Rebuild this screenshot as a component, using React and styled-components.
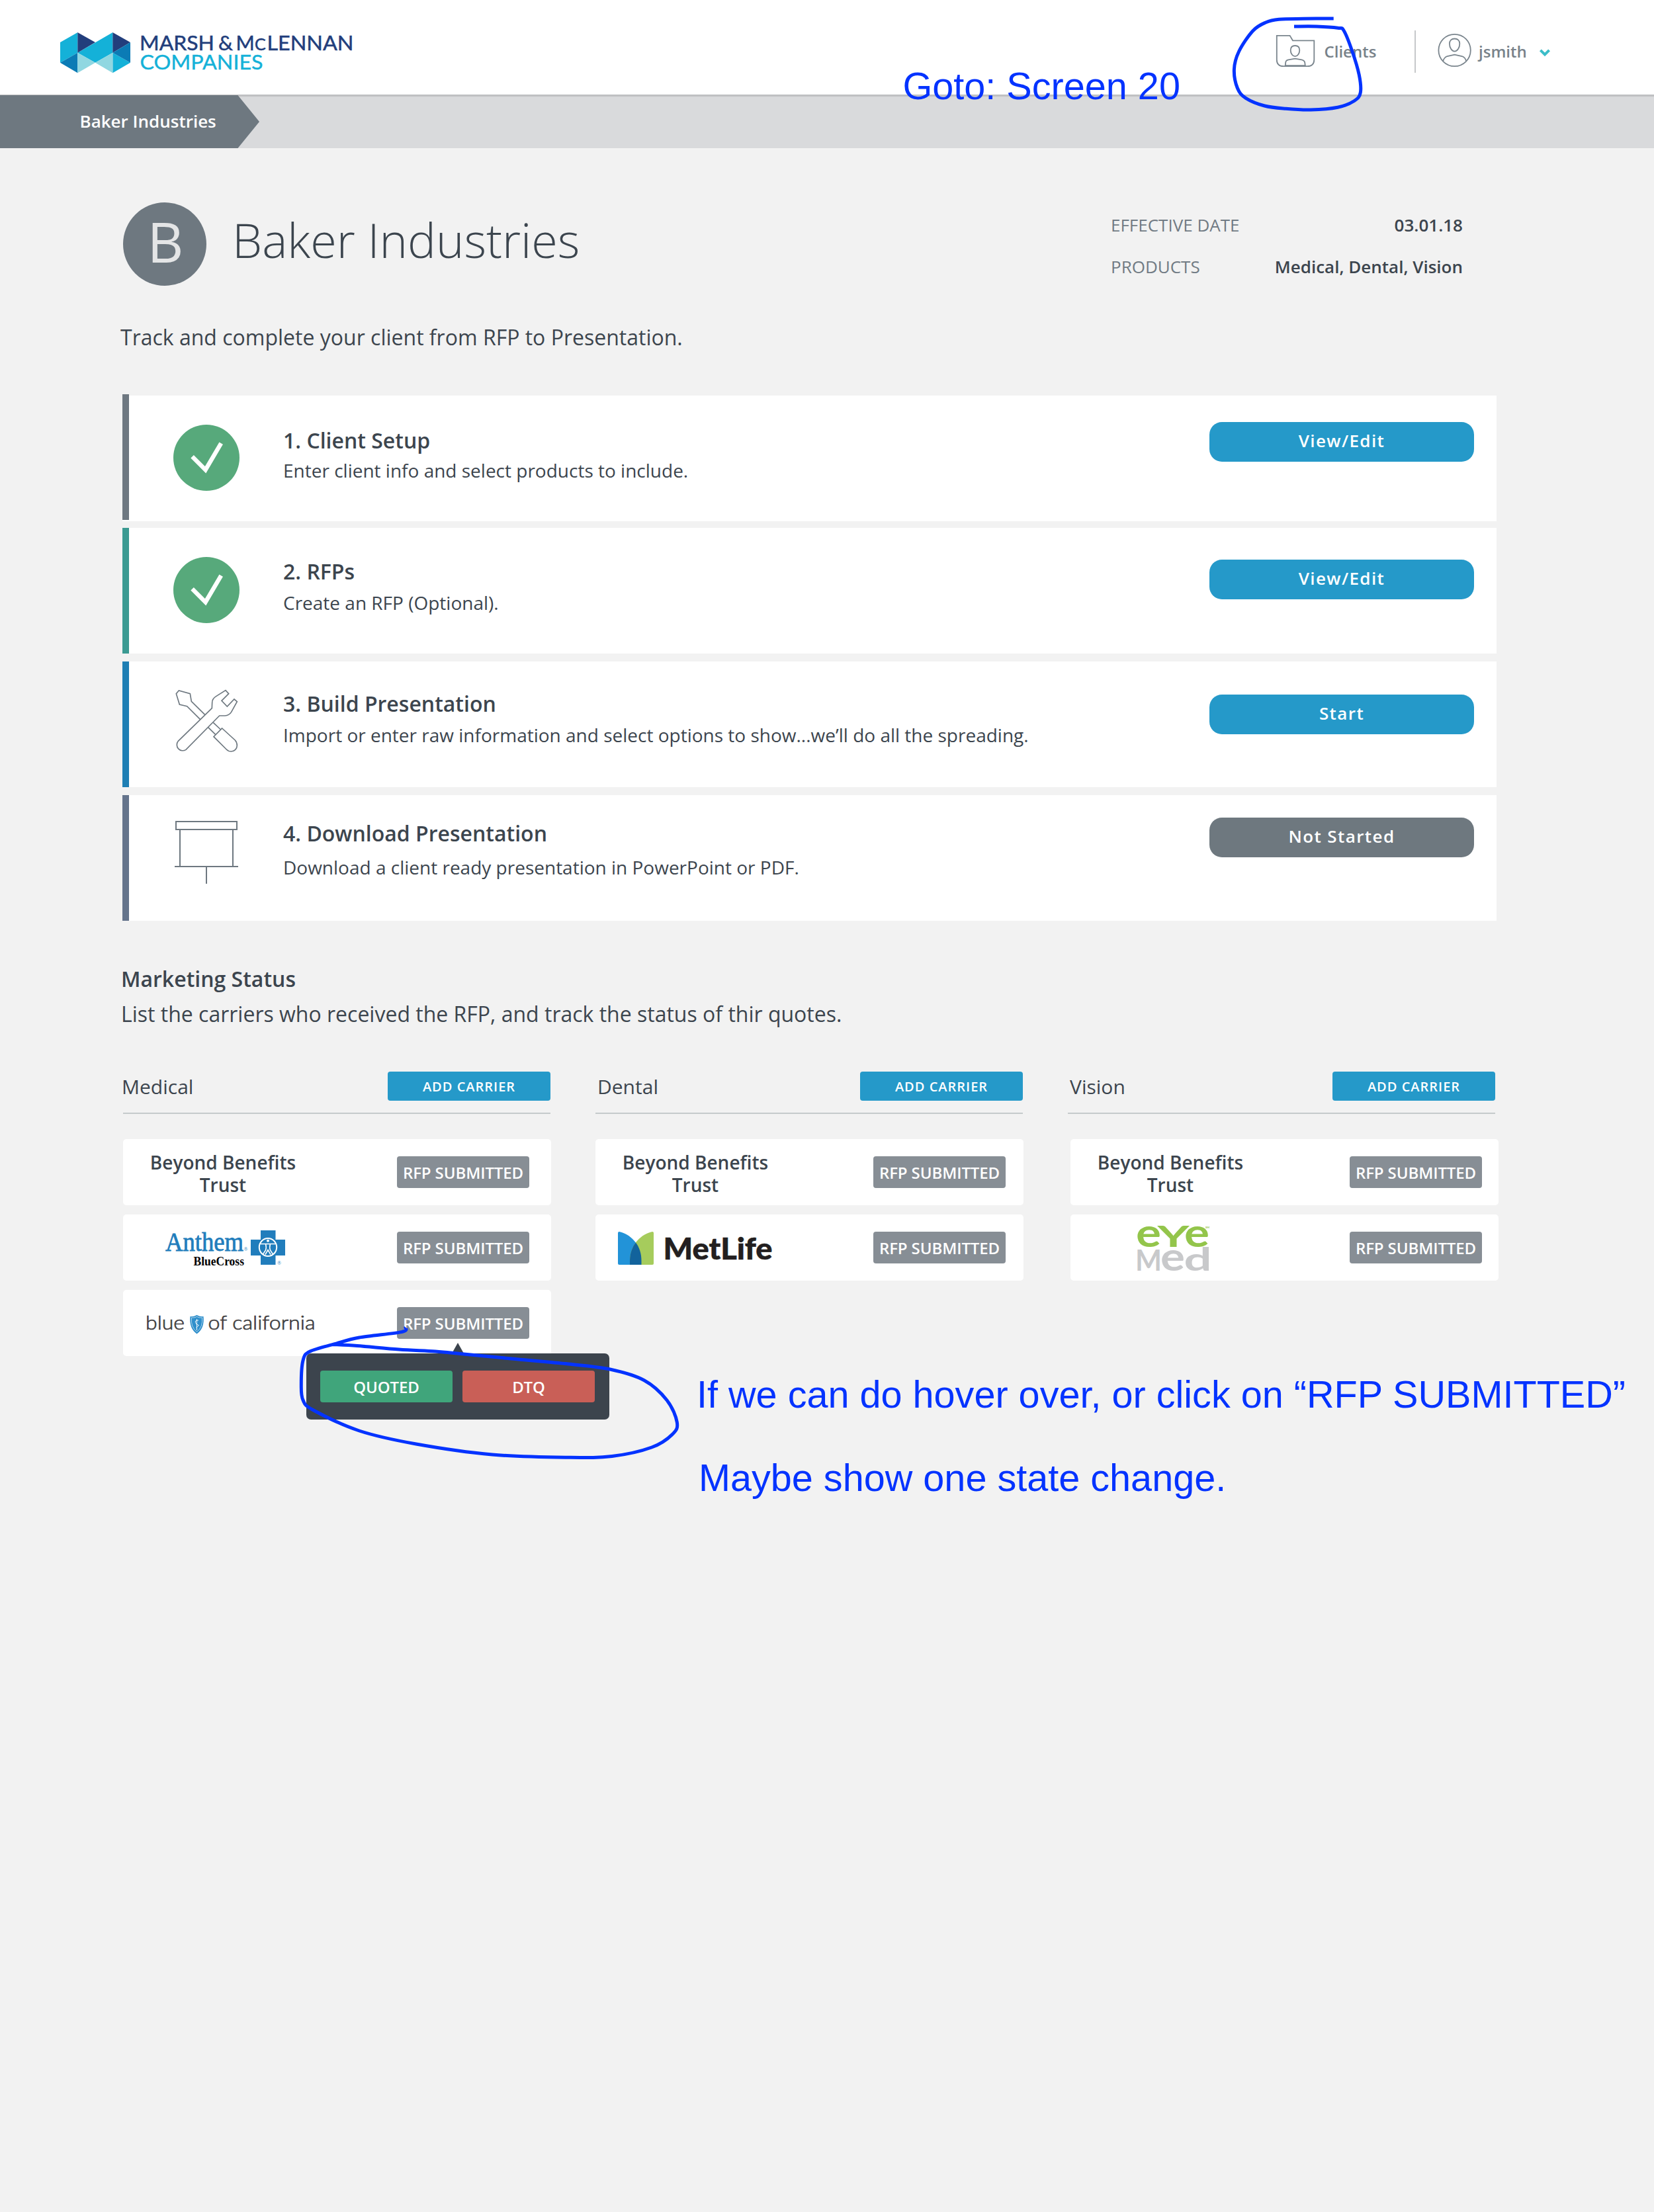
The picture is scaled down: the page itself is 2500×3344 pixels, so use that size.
import React from 'react';
import styled, { createGlobalStyle } from 'styled-components';

const SANS = '"Open Sans", "Noto Sans", sans-serif';
const INK = '#0433ff';
const SLATE = '#3c454e';
const GREY = '#6e7880';
const BLUE = '#2599c9';

const GlobalStyle = createGlobalStyle`
  * { box-sizing: border-box; }
  body { margin: 0; background: #f2f2f2; font-family: ${SANS}; color: ${SLATE}; }
  svg { display: block; flex: none; overflow: visible; }
`;

const Page = styled.div`
  position: relative;
  width: 2500px;
  height: 3344px;
  overflow: hidden;
  background: #f2f2f2;
`;

/* ---------- top bar ---------- */

const Header = styled.header`
  display: flex;
  align-items: flex-start;
  height: 144px;
  padding: 0 156px 0 91px;
  background: #fff;
  border-bottom: 1px solid #b5b6b8;
`;

const LogoWrap = styled.div`
  padding-top: 39px;
`;

const Nav = styled.nav`
  display: flex;
  align-items: flex-start;
  margin-left: auto;
  padding-top: 46px;
`;

const NavItem = styled.div`
  display: flex;
  width: ${(p) => p.$width}px;
`;

const NavLabel = styled.span`
  padding-top: 14px;
  margin-left: ${(p) => p.$gap}px;
  font-size: 24px;
  font-weight: 600;
  line-height: 35px;
  color: #78828a;
`;

const NavDivider = styled.span`
  width: 2px;
  height: 64px;
  margin-right: 33px;
  background: #c6c8ca;
`;

const CrumbBar = styled.div`
  height: 80px;
  background: linear-gradient(#c3c4c6 0 2px, #d5d6d8 2px 3px, #d9dadc 3px);
`;

const Crumb = styled.div`
  width: 392px;
  height: 80px;
  padding-left: 120.5px;
  background: #6e7880;
  clip-path: polygon(0 0, 359.5px 0, 100% 50%, 359.5px 100%, 0 100%);
  color: #fff;
  font-size: 26px;
  font-weight: 600;
  line-height: 78px;
`;

/* ---------- client heading ---------- */

const Main = styled.main`
  width: 2081px;
  margin-left: 185px;
  padding-top: 82px;
`;

const Intro = styled.section`
  display: flex;
  height: 126px;
`;

const Avatar = styled.div`
  width: 126px;
  height: 126px;
  margin-left: 1px;
  border-radius: 50%;
  background: #6e7880;
  color: #e4e5e6;
  font-size: 85px;
  line-height: 116px;
  text-align: center;
  text-indent: 2px;
`;

const ClientName = styled.h1`
  margin: 0 0 0 39px;
  width: 1328px;
  font-size: 72px;
  font-weight: 300;
  line-height: 113px;
`;

const Facts = styled.dl`
  width: 532px;
  margin: 0;
  padding-top: 14px;
`;

const Fact = styled.div`
  display: flex;
  justify-content: space-between;
  height: 63px;
  font-size: 26px;
  line-height: 40px;
`;

const FactLabel = styled.dt`
  color: #717b84;
`;

const FactValue = styled.dd`
  margin: 0;
  font-weight: 600;
`;

const Lead = styled.p`
  margin: 56px 0 0 -3px;
  font-size: 32px;
  line-height: 44px;
`;

/* ---------- steps ---------- */

const Steps = styled.section`
  width: 2077px;
  margin-top: 66px;
`;

const StepCard = styled.article`
  display: flex;
  align-items: flex-start;
  height: 190px;
  margin-bottom: ${(p) => p.$gap}px;
  background: #fff;
`;

const Accent = styled.span`
  flex: none;
  width: 10px;
  height: 190px;
  margin-top: ${(p) => p.$shift || 0}px;
  background: ${(p) => p.$color};
`;

const StepIcon = styled.div`
  width: 233px;
  padding: ${(p) => p.$top}px 0 0 67px;
`;

const StepText = styled.div`
  flex: 1;
  padding-top: ${(p) => p.$top}px;
`;

const StepTitle = styled.h2`
  margin: 0 0 ${(p) => p.$gap}px;
  font-size: 32px;
  font-weight: 600;
  line-height: 44px;
`;

const StepDesc = styled.p`
  margin: 0;
  font-size: 28px;
  line-height: 38px;
`;

const StepButton = styled.button`
  width: 400px;
  height: 60px;
  margin: ${(p) => p.$top}px 34px 0 0;
  padding: 0 0 3px;
  border: 0;
  border-radius: 19px;
  background: ${(p) => (p.$muted ? '#6e787f' : BLUE)};
  color: #fff;
  font: 600 26px/55px ${SANS};
  letter-spacing: 1.4px;
`;

/* ---------- marketing status ---------- */

const Marketing = styled.section`
  padding-left: 1px;
  margin-top: 65px;
`;

const MarketingTitle = styled.h2`
  margin: 0;
  font-size: 32px;
  font-weight: 600;
  line-height: 46px;
  text-indent: -3px;
`;

const MarketingLead = styled.p`
  margin: 6px 0 0;
  font-size: 32px;
  line-height: 47px;
  text-indent: -3px;
`;

const Columns = styled.div`
  display: grid;
  grid-template-columns: repeat(3, 646px);
  column-gap: 68px;
  margin-top: 64px;
`;

const ColumnHead = styled.div`
  display: flex;
  justify-content: space-between;
  height: 64px;
  border-bottom: 2px solid #c5cacb;
`;

const ColumnTitle = styled.h3`
  margin: 0 0 0 ${(p) => p.$indent}px;
  font-size: 30px;
  font-weight: 400;
  line-height: 45px;
`;

const AddButton = styled.button`
  width: 246px;
  height: 44px;
  padding: 0;
  border: 0;
  border-radius: 4px;
  background: ${BLUE};
  color: #fff;
  font: 600 20px/45px ${SANS};
  letter-spacing: 1px;
`;

const CarrierList = styled.div`
  display: flex;
  flex-direction: column;
  gap: 14px;
  width: 647px;
  margin: 38px 0 0 ${(p) => p.$shift}px;
`;

const CarrierCard = styled.div`
  display: flex;
  align-items: center;
  height: 100px;
  border-radius: 5px;
  background: #fff;
`;

const CarrierBrand = styled.div`
  flex: none;
  width: ${(p) => p.$width}px;
`;

const CarrierName = styled.div`
  width: 302px;
  padding: 0 30px;
  margin-top: 3px;
  font-size: 28px;
  font-weight: 600;
  line-height: 34px;
  text-align: center;
`;

const BadgeAnchor = styled.div`
  position: relative;
`;

const Badge = styled.div`
  width: 200px;
  height: 48px;
  border-radius: 4px;
  background: ${(p) => p.$color || '#878e95'};
  color: #fff;
  font-size: 24px;
  font-weight: 600;
  line-height: 50px;
  letter-spacing: -0.1px;
  text-align: center;
  white-space: nowrap;
`;

const Popover = styled.div`
  position: absolute;
  z-index: 2;
  left: -137px;
  top: 70px;
  display: flex;
  gap: 15px;
  width: 458px;
  height: 100px;
  padding: 26px 21px;
  border-radius: 7px;
  background: #3c444d;

  &::before {
    content: '';
    position: absolute;
    left: 220px;
    top: -16px;
    border: solid transparent;
    border-width: 0 9px 16px;
    border-bottom-color: #3c444d;
  }
`;

/* ---------- review notes drawn over the page ---------- */

const Note = styled.div`
  position: absolute;
  z-index: 3;
  left: ${(p) => p.$x}px;
  top: ${(p) => p.$y}px;
  color: ${INK};
  font: 57.6px/66px "Liberation Sans", Arial, sans-serif;
  white-space: nowrap;
`;

const InkLayer = styled.svg`
  position: absolute;
  z-index: 4;
  left: 0;
  top: 0;
  pointer-events: none;
`;

/* Smooth curve through a list of points. */
function smoothPath(pts) {
  let d = `M${pts[0][0]} ${pts[0][1]}`;
  for (let i = 0; i < pts.length - 1; i += 1) {
    const a = pts[i - 1] || pts[i];
    const b = pts[i];
    const c = pts[i + 1];
    const e = pts[i + 2] || c;
    d += `C${b[0] + (c[0] - a[0]) / 6} ${b[1] + (c[1] - a[1]) / 6} ${c[0] - (e[0] - b[0]) / 6} ${
      c[1] - (e[1] - b[1]) / 6
    } ${c[0]} ${c[1]}`;
  }
  return d;
}

const clientsLoop = [
  [2015.7, 28], [1970, 28.3], [1933, 29.3], [1913, 34], [1893.6, 46.7], [1872.5, 78], [1865.4, 105],
  [1870.4, 133.3], [1883, 148.3], [1911.4, 160], [1943.6, 164.3], [1981, 166], [2022, 162.3],
  [2047, 152.5], [2056.3, 140], [2054.3, 113.3], [2043.6, 76.7], [2031, 46], [2022, 42.3],
  [1990, 40], [1956, 40],
];

const popoverLoop = [
  [613, 2006.7], [607, 2013.6], [543, 2022], [506, 2031.7], [468.5, 2043], [458, 2056.7],
  [455.3, 2093], [458, 2116.7], [474, 2132], [543, 2163], [629, 2183], [744, 2199], [859, 2203.3],
  [925, 2201.5], [985, 2188], [1016.6, 2168], [1023.3, 2150], [1008, 2116.7], [973.7, 2086.7],
  [922, 2070], [859, 2062], [773, 2054], [698, 2046.7], [658, 2043], [603, 2040], [540, 2034.5],
  [503, 2032.5],
];

/* ---------- drawings ---------- */

const MarshLogo = () => (
  <svg width="450" height="86" viewBox="0 -10 450 86">
    <g transform="scale(0.33333) translate(-93 -87)">
      <path fill="#14b1d8" d="M93 132 172 87V179L93 224ZM172 179 331 87V179L252 224ZM331 179 411 224 331 271Z" />
      <path fill="#223e7c" d="M172 87 252 132 172 179ZM331 87 411 132 331 179Z" />
      <path fill="#0b7bb5" d="M93 224 172 179V271ZM411 132V224L331 179Z" />
      <path fill="#90d7e1" d="M172 179 252 224 172 271ZM331 179V271L252 224Z" />
    </g>
    <g fontFamily="Lato, sans-serif" fontSize="30.500" fill="#223e7c" stroke="#223e7c" strokeWidth="0.500">
      <text x="120" y="26.700" textLength="113" lengthAdjust="spacingAndGlyphs">MARSH</text>
      <text x="239" y="26.700" textLength="22" lengthAdjust="spacingAndGlyphs">&amp;</text>
      <text x="265.500" y="26.700">M<tspan x="294" fontSize="25">C</tspan></text>
      <text x="312.500" y="26.700" textLength="131" lengthAdjust="spacingAndGlyphs">LENNAN</text>
    </g>
    <text x="120.500" y="56" fontFamily="Lato, sans-serif" fontSize="30.500" fill="#14b1d8" stroke="#14b1d8" strokeWidth="0.400" textLength="186" lengthAdjust="spacingAndGlyphs">COMPANIES</text>
  </svg>
);

const ClientsIcon = () => (
  <svg width="60" height="60" viewBox="1928 46 60 60" fill="none" stroke="#7a858d" strokeWidth="1.8">
    <path d="M1929.8 53.8H1949.6L1954 61.3H1986.3V90.3Q1986.3 100.2 1976 100.2H1940Q1929.8 100.2 1929.8 90.3Z" />
    <path d="M1957.5 69C1962 69 1964.3 72 1964.3 76C1964.3 81 1961 85.2 1957.5 85.2S1950.7 81 1950.7 76C1950.7 72 1953 69 1957.5 69Z" />
    <path d="M1942.7 99.2 1943.2 94.5Q1943.7 91 1947.5 90.4L1957.5 88.7 1967.5 90.4Q1971.5 91.2 1972.2 94.5L1972.8 99.2Z" />
  </svg>
);

const UserIcon = () => (
  <svg width="52" height="60" viewBox="2173 46 52 60" fill="none" stroke="#7a858d" strokeWidth="1.8">
    <circle cx="2198.6" cy="76" r="24.2" />
    <path d="M2198.6 58.5C2203.5 58.5 2206.3 61.5 2206.3 66C2206.3 72 2202.8 77.6 2198.6 77.6S2190.9 72 2190.9 66C2190.9 61.5 2193.7 58.5 2198.6 58.5Z" />
    <path d="M2181.3 92Q2183 86.5 2187.5 85L2198.6 82.6 2209.7 85Q2214.5 86.5 2216 92" />
  </svg>
);

const Chevron = () => (
  <svg width="18" height="60" viewBox="2326 46 18 60" fill="none" stroke="#3bbdc8" strokeWidth="4">
    <path d="M2328.4 75.8 2335 82.4 2341.6 75.8" />
  </svg>
);

const CheckIcon = () => (
  <svg width="100" height="100" viewBox="0 0 100 100">
    <circle cx="50" cy="50" r="50" fill="#57a97b" />
    <path d="M28.6 48.2 48.6 68.2 72.2 28.2" fill="none" stroke="#fff" strokeWidth="6.4" />
  </svg>
);

const ToolsIcon = () => (
  <svg width="100" height="100" viewBox="276 186 300 300" fill="none" stroke={GREY} strokeWidth="5">
    <path d="M419 301 358 241 352 206 301 192 289 206 304 255 338 263 398 323" />
    <path d="M457 337 491 369M434 359 467 391" />
    <path d="M497 363 556 417Q565 427 565 441A27 27 0 0 1 538 468Q526 468 517 459L459 401Z" />
    <path d="M451 272 298 421A26.5 26.5 0 0 0 333 460L485 306H510Q529 305 539 289L565 242 552 231 520 264 495 238 527 206 513 191 470 218Q452 229 452 247Z" />
  </svg>
);

const ScreenIcon = () => (
  <svg width="100" height="100" viewBox="276 780 300 300" fill="none" stroke={GREY} strokeWidth="6">
    <path d="M288 786H564V822H288ZM306 822V990M546 822V990M282 990H570M426 990V1068" />
  </svg>
);

const AnthemLogo = () => (
  <svg width="400" height="100" viewBox="0 0 400 100">
    <g fontFamily='"Liberation Serif", serif'>
      <text x="64" y="54.7" fontSize="40" fill="#217dbc" stroke="#217dbc" strokeWidth="0.8" textLength="118" lengthAdjust="spacingAndGlyphs">Anthem</text>
      <text x="182.500" y="55" fontSize="8" fill="#217dbc">®</text>
      <text x="106.500" y="76.700" fontSize="19" fontWeight="700" fill="#000" textLength="76.500" lengthAdjust="spacingAndGlyphs">BlueCross</text>
      <text x="233" y="76" fontSize="8" fill="#217dbc">®</text>
    </g>
    <path fill="#217dbc" d="M208 24H230.500V38H245V62H230.500V76H208V62H193V38H208Z" />
    <ellipse cx="219" cy="49.500" rx="13.200" ry="13.500" fill="#217dbc" stroke="#fff" strokeWidth="2" />
    <g fill="none" stroke="#fff" strokeWidth="1.600">
      <circle cx="219" cy="39.800" r="2" fill="#fff" stroke="none" />
      <path d="M207.500 44.500H230.500M215.500 44.500Q217 50 215.500 54L211.500 60M222.500 44.500Q221 50 222.500 54L226.500 60M215 60.500 219 53.500 223 60.500" />
    </g>
  </svg>
);

const BlueShieldLogo = () => (
  <svg width="400" height="100" viewBox="0 0 400 100">
    <g fontFamily="Lato, sans-serif" fontSize="29" fontWeight="300" fill="#414042" stroke="#414042" strokeWidth="0.700">
      <text x="34" y="60" textLength="59" lengthAdjust="spacingAndGlyphs">blue</text>
      <text x="128.500" y="60" textLength="162" lengthAdjust="spacingAndGlyphs">of california</text>
    </g>
    <path fill="#2f8fcb" d="M101.500 40Q106 41 111.500 38Q117 41 121.500 40Q123.500 58 111.500 66.500Q99.500 58 101.500 40Z" />
    <path fill="none" stroke="#fff" strokeWidth="0.600" d="M103.500 42Q108 42.500 111.500 40.500Q115 42.500 119.500 42Q121 56 111.500 63.500Q102 56 103.500 42Z" />
    <path fill="none" stroke="#fff" strokeWidth="0.900" d="M111.500 44V61M114 46Q108 46 109.500 49.500T113.500 53T110.500 57" />
  </svg>
);

const MetLifeLogo = () => (
  <svg width="400" height="100" viewBox="0 0 400 100">
    <path fill="#2293d8" d="M34 28Q34 26 36 26C51 29 69.500 44 69.500 70V76H36Q34 76 34 74Z" />
    <path fill="#a6cc5c" d="M88 28Q88 26 86 26C71 29 52 44 52 70V76H86Q88 76 88 74Z" />
    <path fill="#12639c" d="M60.900 42.500C66 49 69.500 58 69.500 70V76H52V70C52 58 56 49 60.900 42.500Z" />
    <text x="102.500" y="67.700" fontFamily="Lato, sans-serif" fontSize="46" fontWeight="900" fill="#231f20" stroke="#231f20" strokeWidth="0.600" textLength="165" lengthAdjust="spacingAndGlyphs">MetLife</text>
  </svg>
);

const EyeMedLogo = () => (
  <svg width="400" height="100" viewBox="0 0 400 100" fontFamily="Lato, sans-serif" fontWeight="700">
    <g fill="#93c54b">
      <text x="99" y="49" fontSize="59" textLength="38" lengthAdjust="spacingAndGlyphs">e</text>
      <text x="131.500" y="48.700" fontSize="43" textLength="48" lengthAdjust="spacingAndGlyphs">Y</text>
      <text x="172" y="49" fontSize="59" textLength="38" lengthAdjust="spacingAndGlyphs">e</text>
    </g>
    <g fill="#c8c9cb">
      <text x="98" y="84.500" fontSize="43" textLength="40" lengthAdjust="spacingAndGlyphs">M</text>
      <text x="136" y="84.500" fontSize="59" textLength="37" lengthAdjust="spacingAndGlyphs">e</text>
      <text x="171.500" y="84.500" fontSize="47.500" textLength="42" lengthAdjust="spacingAndGlyphs">d</text>
    </g>
    <text x="204" y="20.500" fontSize="4" fill="#93c54b">SM</text>
  </svg>
);

/* ---------- data ---------- */

const steps = [
  { title: '1. Client Setup', desc: 'Enter client info and select products to include.', action: 'View/Edit', color: '#6e7881', icon: <CheckIcon />, iconTop: 44, textTop: 46, lineGap: 4, buttonTop: 40, gap: 10, shift: -2 },
  { title: '2. RFPs', desc: 'Create an RFP (Optional).', action: 'View/Edit', color: '#3b9a92', icon: <CheckIcon />, iconTop: 44, textTop: 44, lineGap: 6, buttonTop: 48, gap: 12 },
  { title: '3. Build Presentation', desc: 'Import or enter raw information and select options to show...we’ll do all the spreading.', action: 'Start', color: '#1f7fb4', icon: <ToolsIcon />, iconTop: 42, textTop: 42, lineGap: 6, buttonTop: 50, gap: 12 },
  { title: '4. Download Presentation', desc: 'Download a client ready presentation in PowerPoint or PDF.', action: 'Not Started', muted: true, color: '#65748c', icon: <ScreenIcon />, iconTop: 38, textTop: 36, lineGap: 10, buttonTop: 34, gap: 0 },
];

const beyond = { name: 'Beyond Benefits Trust' };

const products = [
  { title: 'Medical', indent: -2, shift: 0, badgeAt: 414, carriers: [beyond, { logo: <AnthemLogo /> }, { logo: <BlueShieldLogo />, open: true }] },
  { title: 'Dental', indent: 3, shift: 0, badgeAt: 420, carriers: [beyond, { logo: <MetLifeLogo /> }] },
  { title: 'Vision', indent: 3, shift: 4, badgeAt: 422, carriers: [beyond, { logo: <EyeMedLogo /> }] },
];

export default function App() {
  return (
    <Page>
      <GlobalStyle />
      <Header>
        <LogoWrap><MarshLogo /></LogoWrap>
        <Nav>
          <NavItem $width={210}>
            <ClientsIcon />
            <NavLabel $gap={13.5}>Clients</NavLabel>
          </NavItem>
          <NavDivider />
          <NavItem $width={153}>
            <UserIcon />
            <NavLabel $gap={10}>jsmith</NavLabel>
          </NavItem>
          <Chevron />
        </Nav>
      </Header>
      <CrumbBar><Crumb>Baker Industries</Crumb></CrumbBar>

      <Main>
        <Intro>
          <Avatar>B</Avatar>
          <ClientName>Baker Industries</ClientName>
          <Facts>
            <Fact><FactLabel>EFFECTIVE DATE</FactLabel><FactValue>03.01.18</FactValue></Fact>
            <Fact><FactLabel>PRODUCTS</FactLabel><FactValue>Medical, Dental, Vision</FactValue></Fact>
          </Facts>
        </Intro>
        <Lead>Track and complete your client from RFP to Presentation.</Lead>

        <Steps>
          {steps.map((s) => (
            <StepCard key={s.title} $gap={s.gap}>
              <Accent $color={s.color} $shift={s.shift} />
              <StepIcon $top={s.iconTop}>{s.icon}</StepIcon>
              <StepText $top={s.textTop}>
                <StepTitle $gap={s.lineGap}>{s.title}</StepTitle>
                <StepDesc>{s.desc}</StepDesc>
              </StepText>
              <StepButton $top={s.buttonTop} $muted={s.muted}>{s.action}</StepButton>
            </StepCard>
          ))}
        </Steps>

        <Marketing>
          <MarketingTitle>Marketing Status</MarketingTitle>
          <MarketingLead>List the carriers who received the RFP, and track the status of thir quotes.</MarketingLead>
          <Columns>
            {products.map((p) => (
              <div key={p.title}>
                <ColumnHead>
                  <ColumnTitle $indent={p.indent}>{p.title}</ColumnTitle>
                  <AddButton>ADD CARRIER</AddButton>
                </ColumnHead>
                <CarrierList $shift={p.shift}>
                  {p.carriers.map((c, i) => (
                    <CarrierCard key={i}>
                      <CarrierBrand $width={p.badgeAt}>
                        {c.logo || <CarrierName>{c.name}</CarrierName>}
                      </CarrierBrand>
                      <BadgeAnchor>
                        <Badge>RFP SUBMITTED</Badge>
                        {c.open && (
                          <Popover>
                            <Badge $color="#40a57b">QUOTED</Badge>
                            <Badge $color="#c95f57">DTQ</Badge>
                          </Popover>
                        )}
                      </BadgeAnchor>
                    </CarrierCard>
                  ))}
                </CarrierList>
              </div>
            ))}
          </Columns>
        </Marketing>
      </Main>

      <Note $x={1364.5} $y={97}>Goto: Screen 20</Note>
      <Note $x={1053} $y={2075}>If we can do hover over, or click on “RFP SUBMITTED”</Note>
      <Note $x={1056} $y={2201}>Maybe show one state change.</Note>
      <InkLayer width="2500" height="2300" viewBox="0 0 2500 2300" fill="none" stroke={INK} strokeWidth="5">
        <path d={smoothPath(clientsLoop)} />
        <path d={smoothPath(popoverLoop)} />
      </InkLayer>
    </Page>
  );
}
